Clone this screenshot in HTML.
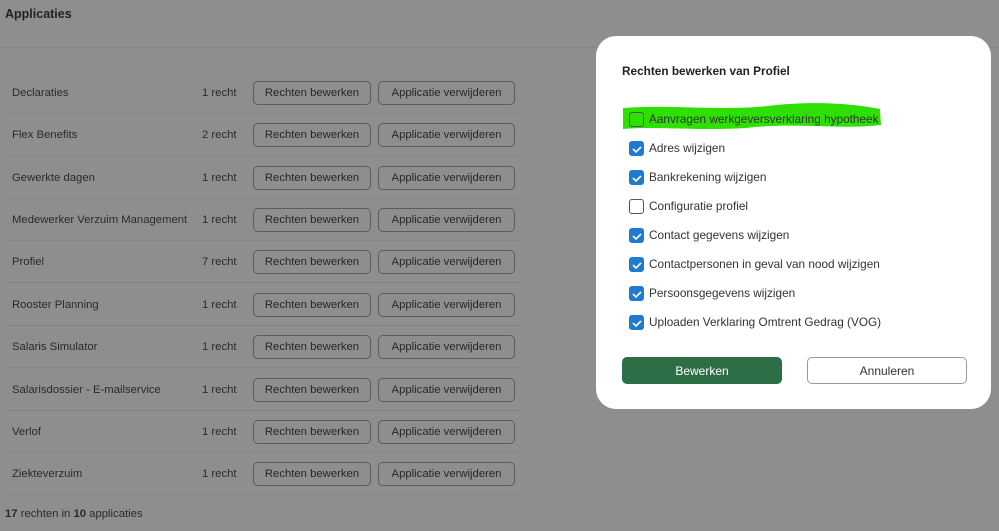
<!DOCTYPE html>
<html><head><meta charset="utf-8"><style>
*{box-sizing:border-box;margin:0;padding:0}
body{width:999px;height:531px;background:#8e8e8e;font-family:"Liberation Sans",sans-serif;color:#2a2a2a;position:relative;overflow:hidden;font-size:11.3px}
.t{position:absolute;left:5px;top:7px;font-weight:bold;font-size:12.5px;color:#222}
.hl{position:absolute;left:0;top:47px;width:999px;height:1px;background:#858585}
.row{position:absolute;left:4px;width:517px;height:42px;border-bottom:1px solid #848484}
.row .n{position:absolute;left:8px;top:15px}
.row .c{position:absolute;left:198px;top:15px}
.b{position:absolute;top:9px;height:24px;border:1px solid #5c5c5c;border-radius:5px;text-align:center;line-height:23px;color:#262626}
.b1{left:249px;width:118px}.b2{left:374px;width:137px}
.foot{position:absolute;left:5px;top:508px}
.m{position:absolute;left:596px;top:36px;width:395px;height:373px;background:#fff;border-radius:20px}
.mt{position:absolute;left:26px;top:28px;font-weight:bold;font-size:11.8px;color:#222}
.ck{position:absolute;left:33px;width:15px;height:15px;border-radius:3px;border:1px solid #555}
.ck.on{background:#1e7bd0;border-color:#1e7bd0}
.lb{position:absolute;left:53px;font-size:11.8px;color:#333}
.bt{position:absolute;top:321px;height:27px;border-radius:5px;text-align:center;line-height:26px;font-size:12px}
</style></head><body>
<div class="t">Applicaties</div>
<div class="hl"></div>
<div class="row" style="top:72px"><span class="n">Declaraties</span><span class="c">1 recht</span><div class="b b1">Rechten bewerken</div><div class="b b2">Applicatie verwijderen</div></div>
<div class="row" style="top:114px"><span class="n">Flex Benefits</span><span class="c">2 recht</span><div class="b b1">Rechten bewerken</div><div class="b b2">Applicatie verwijderen</div></div>
<div class="row" style="top:157px"><span class="n">Gewerkte dagen</span><span class="c">1 recht</span><div class="b b1">Rechten bewerken</div><div class="b b2">Applicatie verwijderen</div></div>
<div class="row" style="top:199px"><span class="n">Medewerker Verzuim Management</span><span class="c">1 recht</span><div class="b b1">Rechten bewerken</div><div class="b b2">Applicatie verwijderen</div></div>
<div class="row" style="top:241px"><span class="n">Profiel</span><span class="c">7 recht</span><div class="b b1">Rechten bewerken</div><div class="b b2">Applicatie verwijderen</div></div>
<div class="row" style="top:284px"><span class="n">Rooster Planning</span><span class="c">1 recht</span><div class="b b1">Rechten bewerken</div><div class="b b2">Applicatie verwijderen</div></div>
<div class="row" style="top:326px"><span class="n">Salaris Simulator</span><span class="c">1 recht</span><div class="b b1">Rechten bewerken</div><div class="b b2">Applicatie verwijderen</div></div>
<div class="row" style="top:369px"><span class="n">Salarisdossier - E-mailservice</span><span class="c">1 recht</span><div class="b b1">Rechten bewerken</div><div class="b b2">Applicatie verwijderen</div></div>
<div class="row" style="top:411px"><span class="n">Verlof</span><span class="c">1 recht</span><div class="b b1">Rechten bewerken</div><div class="b b2">Applicatie verwijderen</div></div>
<div class="row" style="top:453px"><span class="n">Ziekteverzuim</span><span class="c">1 recht</span><div class="b b1">Rechten bewerken</div><div class="b b2">Applicatie verwijderen</div></div>
<div class="foot"><b>17</b> rechten in <b>10</b> applicaties</div>
<div class="m">
<div class="mt">Rechten bewerken van Profiel</div>
<svg style="position:absolute;left:0;top:0" width="395" height="120"><path d="M27 72 C80 68 130 76 180 69 C230 64 270 70 284 73 L285 89 C240 94 200 86 150 92 C100 95 60 90 27 93 Z" fill="#2de000"/></svg>
<div class="ck" style="top:76px"></div><div class="lb" style="top:76px">Aanvragen werkgeversverklaring hypotheek</div>
<div class="ck on" style="top:105px"></div><div class="lb" style="top:105px">Adres wijzigen</div>
<div class="ck on" style="top:134px"></div><div class="lb" style="top:134px">Bankrekening wijzigen</div>
<div class="ck" style="top:163px"></div><div class="lb" style="top:163px">Configuratie profiel</div>
<div class="ck on" style="top:192px"></div><div class="lb" style="top:192px">Contact gegevens wijzigen</div>
<div class="ck on" style="top:221px"></div><div class="lb" style="top:221px">Contactpersonen in geval van nood wijzigen</div>
<div class="ck on" style="top:250px"></div><div class="lb" style="top:250px">Persoonsgegevens wijzigen</div>
<div class="ck on" style="top:279px"></div><div class="lb" style="top:279px">Uploaden Verklaring Omtrent Gedrag (VOG)</div>
<svg style="position:absolute;left:0;top:0" width="60" height="300"><g fill="none" stroke="#fff" stroke-width="1.6"><path d="M37 113l3 3 5-5"/><path d="M37 142l3 3 5-5"/><path d="M37 200l3 3 5-5"/><path d="M37 229l3 3 5-5"/><path d="M37 258l3 3 5-5"/><path d="M37 287l3 3 5-5"/></g></svg>
<div class="bt" style="left:26px;width:160px;background:#2d6e47;color:#fff;line-height:28px">Bewerken</div>
<div class="bt" style="left:211px;width:160px;border:1px solid #999;color:#333">Annuleren</div>
</div>
</body></html>
